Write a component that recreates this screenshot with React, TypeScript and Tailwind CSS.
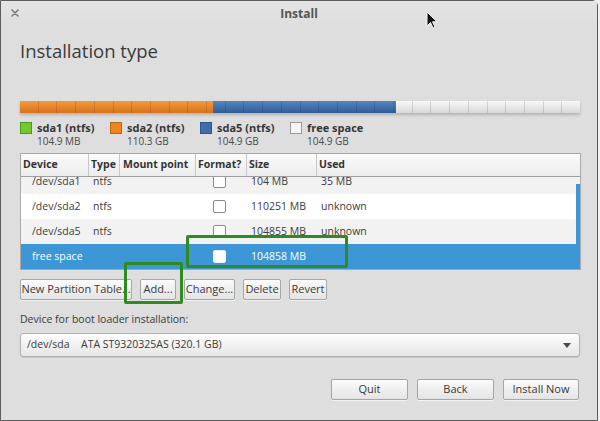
import type { ReactNode } from 'react';

const FONT = { fontFamily: '"Open Sans", "Noto Sans", "DejaVu Sans", sans-serif' };

function Button({ children, w }: { children: ReactNode; w: string }) {
  return (
    <div
      className={`${w} flex h-[21px] items-center justify-center whitespace-nowrap rounded-[2px] border border-[#a6a6a6] bg-gradient-to-b from-[#fbfbfb] to-[#e4e4e4] text-[11px] text-[#3a3a3a] shadow-[0_1px_0_rgba(255,255,255,0.6)]`}
    >
      {children}
    </div>
  );
}

function Swatch({ color, name, size }: { color: string; name: string; size: string }) {
  return (
    <div className="flex w-[90px] items-start gap-[5px]">
      <span className={`mt-[1px] size-[12px] shrink-0 border ${color}`} />
      <div>
        <div className="whitespace-nowrap text-[11px] font-bold leading-[14px] text-[#363636]">{name}</div>
        <div className="whitespace-nowrap text-[10px] leading-[13px] text-[#4a4a4a]">{size}</div>
      </div>
    </div>
  );
}

function Checkbox({ selected = false }: { selected?: boolean }) {
  return (
    <span
      className={`block size-[13px] rounded-[2px] border bg-white ${selected ? 'border-[#e8f2fa]' : 'border-[#8c8c8c]'}`}
    />
  );
}

const rows = [
  { dev: '/dev/sda1', type: 'ntfs', size: '104 MB', used: '35 MB', bg: 'bg-[#f2f2f2]' },
  { dev: '/dev/sda2', type: 'ntfs', size: '110251 MB', used: 'unknown', bg: 'bg-white' },
  { dev: '/dev/sda5', type: 'ntfs', size: '104855 MB', used: 'unknown', bg: 'bg-[#f2f2f2]' },
  { dev: 'free space', type: '', size: '104858 MB', used: '', bg: 'bg-[#3d97d7]', sel: true },
];

export default function App() {
  return (
    <div className="relative h-[421px] w-[600px] overflow-hidden bg-[#f0f0f0]" style={FONT}>
      <div className="flex h-[421px] w-[598px] flex-col rounded-tr-[6px] border border-[#5c5c5c] bg-[#dedede]">
        {/* title bar */}
        <div className="relative flex h-[25px] shrink-0 items-center justify-center bg-gradient-to-b from-[#e4e4e4] to-[#dedede]">
          <svg className="absolute left-[10px] top-[8px]" width="8" height="8" viewBox="0 0 8 8" aria-hidden>
            <path d="M1 1 L7 7 M7 1 L1 7" stroke="#7a7a7a" strokeWidth="1.6" strokeLinecap="round" />
          </svg>
          <span className="text-[12px] font-bold text-[#555]">Install</span>
        </div>

        <div className="flex flex-col pl-[19px] pr-[17px]">
          <h1 className="mt-[11px] text-[18.5px] leading-[28px] text-[#3a3a3a]">Installation type</h1>

          {/* partition bar */}
          <div className="relative mt-[36px] h-[12px] w-[560px] shadow-[0_2px_3px_rgba(0,0,0,0.2)]">
            <div className="flex h-full">
              <div className="w-[193px] bg-gradient-to-b from-[#f49a3a] to-[#d8731b]" />
              <div className="w-[183px] bg-gradient-to-b from-[#5485c0] to-[#325e98]" />
              <div className="flex-1 bg-gradient-to-b from-[#f8f8f8] to-[#d9d9d9]" />
            </div>
            <div className="absolute inset-0 flex">
              {Array.from({ length: 30 }).map((_, i) => (
                <div key={i} className="flex-1 border-r border-[rgba(0,0,0,0.12)] last:border-r-0" />
              ))}
            </div>
          </div>

          {/* legend */}
          <div className="mt-[8px] flex">
            <Swatch color="border-[#4f9a1a] bg-[#74c92c]" name="sda1 (ntfs)" size="104.9 MB" />
            <Swatch color="border-[#c0650f] bg-[#f0851c]" name="sda2 (ntfs)" size="110.3 GB" />
            <Swatch color="border-[#2c5488] bg-[#3e6ead]" name="sda5 (ntfs)" size="104.9 GB" />
            <Swatch color="border-[#9a9a9a] bg-[#f4f4f4]" name="free space" size="104.9 GB" />
          </div>

          {/* partition table */}
          <div className="mt-[5px] w-[561px] border border-[#a9a9a9] bg-white text-[10.5px]">
            <div className="flex h-[23px] whitespace-nowrap border-b border-[#9d9d9d] bg-gradient-to-b from-[#fbfbfb] to-[#ececec] text-[10.5px] font-bold text-[#333]">
              <div className="flex w-[67px] items-center pl-[2px]">Device</div>
              <div className="flex w-[31px] items-center border-l border-[#c8c8c8] pl-[2px]">Type</div>
              <div className="flex w-[76px] items-center border-l border-[#c8c8c8] pl-[3px]">Mount point</div>
              <div className="flex w-[51px] items-center border-l border-[#c8c8c8] pl-[2px]">Format?</div>
              <div className="flex w-[70px] items-center border-l border-[#c8c8c8] pl-[2px]">Size</div>
              <div className="flex flex-1 items-center border-l border-[#c8c8c8] pl-[2px]">Used</div>
            </div>
            <div className="relative h-[92px] overflow-hidden">
              <div className="-mt-[8px]">
                {rows.map((r) => (
                  <div
                    key={r.dev}
                    className={`flex h-[25px] items-center pr-[4px] ${r.bg} ${r.sel ? 'text-white' : 'text-[#3c3c3c]'}`}
                  >
                    <div className="w-[72px] pl-[11px]">{r.dev}</div>
                    <div className="w-[120px]">{r.type}</div>
                    <div className="flex w-[38px] justify-start">
                      <Checkbox selected={r.sel} />
                    </div>
                    <div className="w-[70px]">{r.size}</div>
                    <div className="flex-1">{r.used}</div>
                  </div>
                ))}
              </div>
              <div className="absolute bottom-0 right-0 top-[7px] w-[4px] bg-[#3d97d7]" />
            </div>
          </div>

          {/* partition buttons */}
          <div className="mt-[9px] flex gap-2">
            <Button w="w-[112px]">New Partition Table...</Button>
            <Button w="w-[36px]">Add...</Button>
            <Button w="w-[51px]">Change...</Button>
            <Button w="w-[38px]">Delete</Button>
            <Button w="w-[38px]">Revert</Button>
          </div>

          <div className="mt-[12px] text-[10.5px] leading-[14px] text-[#3a3a3a]">Device for boot loader installation:</div>

          {/* boot loader combo */}
          <div className="mt-[7px] flex h-[24px] w-[560px] items-center rounded-[3px] border border-[#b0b0b0] bg-gradient-to-b from-[#fdfdfd] to-[#e6e6e6] pl-[6px] pr-[8px] text-[10.5px] text-[#3a3a3a] shadow-[0_1px_1px_rgba(0,0,0,0.1)]">
            <span className="w-[54px]">/dev/sda</span>
            <span className="flex-1">ATA ST9320325AS (320.1 GB)</span>
            <svg width="8" height="5" viewBox="0 0 8 5" aria-hidden>
              <path d="M0 0 L8 0 L4 5 Z" fill="#4a4a4a" />
            </svg>
          </div>

          {/* dialog buttons */}
          <div className="mt-[22px] flex justify-end gap-[9px] pr-[1px]">
            <Button w="w-[77px]">Quit</Button>
            <Button w="w-[77px]">Back</Button>
            <Button w="w-[76px]">Install Now</Button>
          </div>
        </div>
      </div>

      {/* annotation boxes */}
      <div className="absolute left-[186px] top-[235px] h-[33px] w-[162px] rounded-[2px] border-[3px] border-[#2f8a1f]" />
      <div className="absolute left-[124px] top-[262px] h-[42px] w-[59px] rounded-[2px] border-[3px] border-[#2f8a1f]" />

      {/* mouse pointer */}
      <svg className="absolute left-[426px] top-[11px]" width="12" height="19" viewBox="0 0 12 19" aria-hidden>
        <path d="M1 1 L1 15 L4.5 11.5 L7 17 L9 16 L6.5 10.8 L11 10.8 Z" fill="#111" stroke="#f5f5f5" strokeWidth="1" />
      </svg>
    </div>
  );
}
